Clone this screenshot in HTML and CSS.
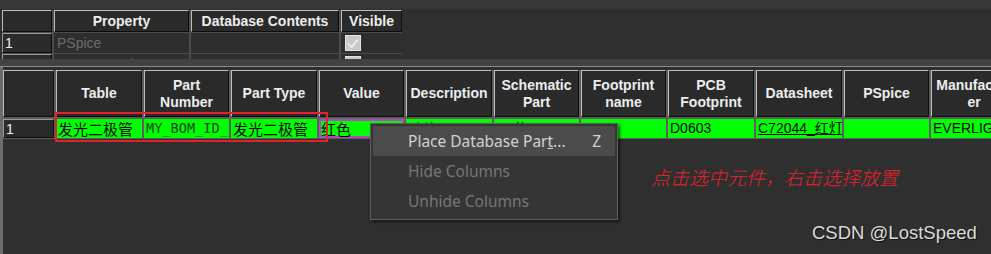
FILE: index.html
```html
<!DOCTYPE html>
<html lang="zh-CN">
<head>
  <meta charset="UTF-8" />
  <title>Part Manager</title>
  <link rel="stylesheet" href="styles.css">
</head>
<body>

  <div class="strip"></div>

  <!-- Property grid -->
  <section class="props">
    <div class="pgrid">
      <div class="hd"></div>
      <div class="hd">Property</div>
      <div class="hd">Database Contents</div>
      <div class="hd">Visible</div>

      <div class="rh">1</div>
      <div class="pc dim">PSpice</div>
      <div class="pc"></div>
      <div class="pc"><span class="chk"><svg width="16" height="16" viewBox="0 0 16 16"><path d="M3 8.5 L6.5 12 L13 4.5" fill="none" stroke="#f2f2f2" stroke-width="1.6"/></svg></span></div>

      <div class="rh">2</div>
      <div class="pc dim">PCB Footprint</div>
      <div class="pc dim">D0603</div>
      <div class="pc"><span class="chk"></span></div>
    </div>
  </section>

  <div class="splitter"></div>

  <!-- Parts grid -->
  <section class="parts">
    <div class="grid">
      <div class="hd"></div>
      <div class="hd">Table</div>
      <div class="hd">Part<br>Number</div>
      <div class="hd">Part Type</div>
      <div class="hd">Value</div>
      <div class="hd">Description</div>
      <div class="hd">Schematic<br>Part</div>
      <div class="hd">Footprint<br>name</div>
      <div class="hd">PCB<br>Footprint</div>
      <div class="hd">Datasheet</div>
      <div class="hd">PSpice</div>
      <div class="hd">Manufactur<br>er</div>

      <div class="rh">1</div>
      <div class="cell cn">发光二极管</div>
      <div class="cell mono">MY_BOM_ID_LED01</div>
      <div class="cell cn">发光二极管</div>
      <div class="cell cn focus">红色</div>
      <div class="cell cn">贴片LED</div>
      <div class="cell">Led/LED_0603</div>
      <div class="cell">0603</div>
      <div class="cell">D0603</div>
      <div class="cell link">C72044_红灯</div>
      <div class="cell"></div>
      <div class="cell">EVERLIGHT</div>
    </div>

    <div class="mark-box"></div>

    <ul class="menu">
      <li class="hot"><span>Place Database Par<u>t</u>...</span><span>Z</span></li>
      <li class="off"><span>Hide Columns</span></li>
      <li class="off"><span>Unhide Columns</span></li>
    </ul>
  </section>

  <p class="note">点击选中元件，右击选择放置</p>
  <p class="stamp">CSDN @LostSpeed</p>

</body>
</html>
```

FILE: styles.css
```css
body {
  margin: 0;
  width: 991px;
  height: 254px;
  overflow: hidden;
  background: #2f2f2f;
  font-family: "Liberation Sans", Arial, sans-serif;
  font-size: 14px;
  position: relative;
}

.strip {
  height: 9px;
  background: #363636;
}

/* top property grid */
.props {
  height: 50px;
  box-sizing: border-box;
  padding: 1px 0 0 2px;
  background: #2f2f2f;
  overflow: hidden;
}

.pgrid {
  display: grid;
  grid-template-columns: 50px 135px 148px 61px;
  grid-template-rows: 22px 20px 20px;
  gap: 1px 2px;
  width: max-content;
  background: #4c4c4c;
}

.hd {
  box-sizing: border-box;
  background: #2a2a2a;
  border-top: 1px solid #bdbdbd;
  border-left: 1px solid #bdbdbd;
  border-right: 1px solid #0c0c0c;
  border-bottom: 1px solid #0c0c0c;
  color: #ededed;
  font-weight: bold;
  text-align: center;
  display: flex;
  align-items: center;
  justify-content: center;
  line-height: 17px;
}

.rh {
  box-sizing: border-box;
  background: #2b2b2b;
  border-top: 1px solid #9a9a9a;
  border-left: 1px solid #9a9a9a;
  border-right: 1px solid #0c0c0c;
  border-bottom: 1px solid #0c0c0c;
  color: #f0f0f0;
  padding-left: 2px;
  display: flex;
  align-items: center;
}

.pc {
  background: #2e2e2e;
  padding-left: 3px;
  display: flex;
  align-items: center;
  white-space: nowrap;
  overflow: hidden;
}

.dim {
  color: #6c6c6c;
}

.chk {
  width: 16px;
  height: 16px;
  margin-left: 1px;
  background: #c9c9c9;
  border: 1px solid #e4e4e4;
  box-sizing: border-box;
  display: flex;
  align-items: center;
  justify-content: center;
}

.chk svg {
  flex: none;
}

.splitter {
  height: 7px;
  background: #424242;
  border-bottom: 1px solid #8c8c8c;
}

/* parts grid */
.parts {
  position: relative;
  height: 187px;
  box-sizing: border-box;
  padding-top: 3px;
  border-left: 3px solid #6c6c6c;
  overflow: hidden;
}

.grid {
  display: grid;
  grid-template-columns: 51px 86px 85px 86px 85px 86px 85px 85px 86px 86px 85px 86px;
  grid-template-rows: 47px 19px;
  gap: 2px;
  padding-bottom: 1px;
  width: max-content;
  background: #5e5e5e;
}

.cell {
  background: #00ff00;
  color: #000;
  padding-left: 2px;
  white-space: nowrap;
  overflow: hidden;
  line-height: 19px;
}

.cn {
  font-family: "Noto Sans CJK SC", sans-serif;
  font-size: 15px;
  line-height: 19px;
}

.mono {
  font-family: "DejaVu Sans Mono", monospace;
  font-size: 13.6px;
  color: #0f3f0f;
}

.focus {
  box-shadow: inset 0 0 0 2px #b548c4;
}

.link {
  text-decoration: underline;
  font-family: "Liberation Sans", "Noto Sans CJK SC", sans-serif;
}

.mark-box {
  position: absolute;
  left: 52px;
  top: 45px;
  width: 273px;
  height: 30px;
  box-sizing: border-box;
  border: 2px solid #e3232c;
}

/* context menu */
.menu {
  position: absolute;
  left: 367px;
  top: 56px;
  width: 248px;
  margin: 0;
  padding: 2px 2px 3px;
  list-style: none;
  box-sizing: border-box;
  background: #353535;
  border: 1px solid #5f5f5f;
  box-shadow: 2px 2px 3px rgba(0, 0, 0, 0.55);
  font-family: "Noto Sans", "Open Sans", sans-serif;
  font-size: 15.5px;
}

.menu li {
  height: 30px;
  padding: 0 14px 0 35px;
  display: flex;
  align-items: center;
  justify-content: space-between;
  color: #d2d2d2;
}

.menu .hot {
  background: #4b4b4b;
}

.menu .off {
  color: #767676;
}

.note {
  position: absolute;
  left: 651px;
  top: 166px;
  margin: 0;
  color: #e8222c;
  font-family: "Noto Sans CJK SC", sans-serif;
  font-style: italic;
  font-weight: 300;
  font-size: 19px;
  line-height: 22px;
}

.stamp {
  position: absolute;
  left: 812px;
  top: 222px;
  margin: 0;
  color: #dadada;
  font-size: 18.5px;
  line-height: 22px;
  text-shadow: 1px 1px 1px #111;
}
```
